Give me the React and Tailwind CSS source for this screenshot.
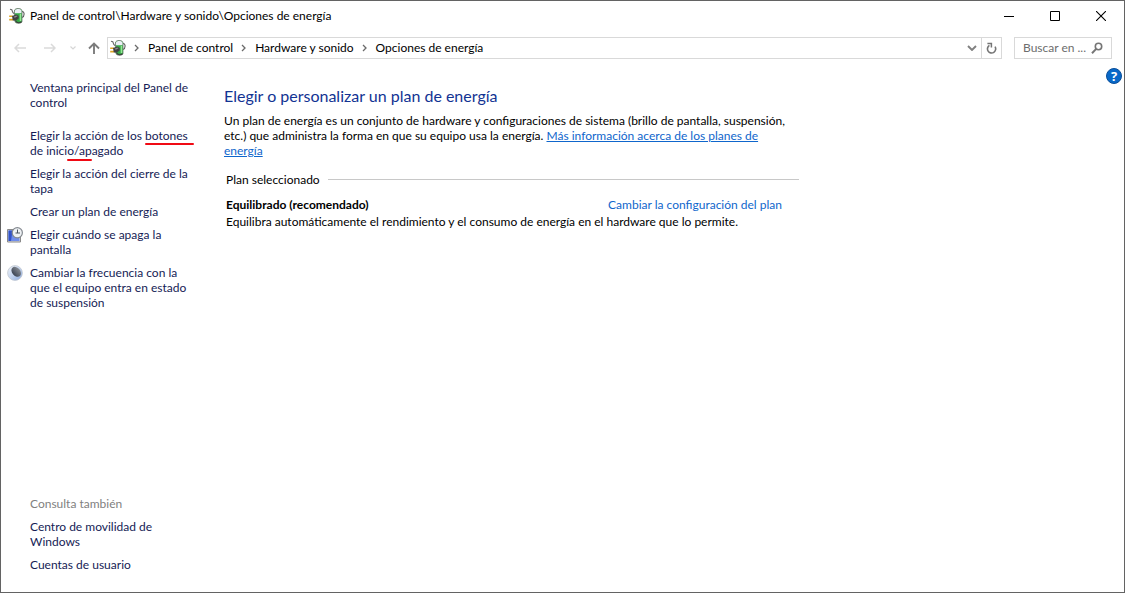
import React from 'react';

function PowerIcon() {
  return (
    <svg className="size-4 shrink-0" viewBox="0 0 16 16" aria-hidden="true">
      <path d="M1 1.2 L2.8 1.8 L3.8 4.5 L5.5 6" fill="none" stroke="#6c6c6c" strokeWidth="1.1" />
      <path d="M13 3.6 C15.8 3.2 15.8 8.5 13 9.5" fill="none" stroke="#5a5a5a" strokeWidth="1.1" />
      <path d="M5.4 3 C5.4 -0.5 13 -0.5 13 3 V13.5 C13 15.8 6 15.8 6 13.5 Z" fill="#35a845" stroke="#6d766f" strokeWidth="0.8" />
      <path d="M5.9 3 C6.2 0.4 12.2 0.4 12.5 3 V5.2 H5.9 Z" fill="#eceef6" />
      <path d="M10.7 6 h1.5 v7 h-1.5 z" fill="#96e896" />
      <path d="M0.2 8.2 h3.6 M0.2 11.6 h4" stroke="#dda422" strokeWidth="1.6" />
      <path d="M3 8 L7.2 6.4 L9.8 8 L9.6 10.4 L6.6 12.8 L3.8 12.4 Z" fill="#414141" />
      <path d="M4.6 8.8 L7.3 7.5 L8.6 8.3 L5.8 9.8 Z" fill="#8b8b8b" />
      <path d="M6.8 13 C8 15.2 11 15.4 12.6 13.6" fill="none" stroke="#3c3c3c" strokeWidth="1.1" />
    </svg>
  );
}

function DisplayClockIcon() {
  return (
    <svg className="size-4 shrink-0" viewBox="0 0 16 16" aria-hidden="true">
      <path d="M0.5 2.5 H13.5 V15 H0.5 Z" fill="#d8dae0" stroke="#8a8a8a" />
      <path d="M1.5 3.5 H12.5 V14 H1.5 Z" fill="#6f8dec" />
      <path d="M1.5 3.5 H5.5 L4 14 H1.5 Z" fill="#3152c8" />
      <circle cx="10.3" cy="5.7" r="5.1" fill="#eef1f4" stroke="#858a90" strokeWidth="1.2" />
      <path d="M10.5 2.5 V6 M8.5 6 H13" stroke="#4c5662" fill="none" />
    </svg>
  );
}

function SleepIcon() {
  return (
    <svg className="size-4 shrink-0" viewBox="0 0 16 16" aria-hidden="true">
      <defs>
        <linearGradient id="moon" x1="0" y1="0" x2="1" y2="1">
          <stop offset="0" stopColor="#f4f7fb" />
          <stop offset="0.5" stopColor="#c4d4ee" />
          <stop offset="1" stopColor="#86a6dc" />
        </linearGradient>
        <linearGradient id="shade" x1="0" y1="0" x2="1" y2="0">
          <stop offset="0" stopColor="#3d4655" />
          <stop offset="1" stopColor="#858a92" />
        </linearGradient>
      </defs>
      <circle cx="8" cy="8" r="7.4" fill="url(#moon)" stroke="#c2c8d0" strokeWidth="0.8" />
      <ellipse cx="9.2" cy="6.8" rx="4" ry="5.6" fill="url(#shade)" transform="rotate(-42 9.2 6.8)" />
    </svg>
  );
}

function Crumb({ children }) {
  return (
    <>
      <svg className="mx-2 h-2 w-[6px] shrink-0" viewBox="0 0 6 8" aria-hidden="true">
        <path d="M1 1 L4 4 L1 7" fill="none" stroke="#6a6a6a" strokeWidth="1.3" />
      </svg>
      <a href="#" className="whitespace-nowrap">{children}</a>
    </>
  );
}

function Marked({ children, line }) {
  return (
    <span className="relative">
      {children}
      <span className={'absolute h-[2px] rounded-full bg-[#f00a14] ' + line} />
    </span>
  );
}

function Task({ icon, children }) {
  return (
    <li className="flex">
      <span className="w-[23px] shrink-0">{icon}</span>
      <a href="#" className="hover:underline">{children}</a>
    </li>
  );
}

export default function App() {
  return (
    <div className="flex min-h-screen flex-col border border-[#636363] bg-white font-['Lato','Open_Sans',sans-serif] text-[12px] leading-[15px] text-black">
      <header className="flex h-[29px] items-center pl-2">
        <PowerIcon />
        <h1 className="ml-[5px] flex-1 whitespace-nowrap">Panel de control\Hardware y sonido\Opciones de energía</h1>
        <button aria-label="Minimizar" className="flex h-full w-[46px] items-center justify-center">
          <svg className="size-[10px]" viewBox="0 0 10 10"><path d="M0 5.5 H10" stroke="#000" /></svg>
        </button>
        <button aria-label="Maximizar" className="flex h-full w-[46px] items-center justify-center">
          <svg className="size-[10px]" viewBox="0 0 10 10"><path d="M0.5 0.5 H9.5 V9.5 H0.5 Z" fill="none" stroke="#000" /></svg>
        </button>
        <button aria-label="Cerrar" className="flex h-full w-[46px] items-center justify-center">
          <svg className="size-[10px]" viewBox="0 0 10 10"><path d="M0 0 L10 10 M10 0 L0 10" stroke="#000" strokeWidth="1.1" /></svg>
        </button>
      </header>

      <nav className="mt-[7px] flex h-[22px] items-center pl-[13px] pr-3" aria-label="Navegación">
        <button aria-label="Atrás" className="w-3">
          <svg className="h-[10px] w-3" viewBox="0 0 12 10"><path d="M12 5 H1 M5 1 L1 5 L5 9" fill="none" stroke="#dadada" strokeWidth="1.5" /></svg>
        </button>
        <button aria-label="Adelante" className="ml-[18px] w-3">
          <svg className="h-[10px] w-3" viewBox="0 0 12 10"><path d="M0 5 H11 M7 1 L11 5 L7 9" fill="none" stroke="#dadada" strokeWidth="1.5" /></svg>
        </button>
        <button aria-label="Ubicaciones recientes" className="ml-[14px] w-[6px]">
          <svg className="h-1 w-[6px]" viewBox="0 0 6 4"><path d="M0.5 0.5 L3 3 L5.5 0.5" fill="none" stroke="#d6d6d6" strokeWidth="1.2" /></svg>
        </button>
        <button aria-label="Subir" className="ml-3 w-3">
          <svg className="h-3 w-3" viewBox="0 0 12 12"><path d="M6 12 V1.5 M1 6.5 L6 1.5 L11 6.5" fill="none" stroke="#7c7c7c" strokeWidth="1.9" /></svg>
        </button>
        <div className="ml-[7px] flex h-full min-w-0 flex-1 items-center border border-[#d9d9d9] pl-[2px]">
          <div className="flex min-w-0 flex-1 items-center pb-px">
            <PowerIcon />
            <Crumb>Panel de control</Crumb>
            <Crumb>Hardware y sonido</Crumb>
            <Crumb>Opciones de energía</Crumb>
          </div>
          <button aria-label="Ubicaciones anteriores" className="mr-1">
            <svg className="h-[6px] w-[10px]" viewBox="0 0 10 6"><path d="M1 1 L5 5 L9 1" fill="none" stroke="#808080" strokeWidth="1.9" /></svg>
          </button>
          <button aria-label="Actualizar" className="flex h-full w-[20px] items-center justify-center border-l border-[#d9d9d9]">
            <svg className="h-3 w-[11px]" viewBox="0 0 11 12">
              <path d="M9 4.6 A4.1 4.1 0 1 1 3.4 3.4" fill="none" stroke="#757575" strokeWidth="1.6" />
              <path d="M1.4 1.4 H5.4 V5.4" fill="none" stroke="#757575" strokeWidth="1.5" />
            </svg>
          </button>
        </div>
        <label className="ml-3 flex h-full w-[98px] items-center border border-[#d9d9d9] px-2 pb-px">
          <input type="text" aria-label="Buscar" placeholder="Buscar en ..." className="min-w-0 flex-1 outline-none placeholder:text-[#6d6d6d]" />
          <svg className="size-3 shrink-0" viewBox="0 0 12 12" aria-hidden="true">
            <circle cx="7.5" cy="4.5" r="3.2" fill="none" stroke="#757575" strokeWidth="1.6" />
            <path d="M5.2 6.9 L1 11.2" stroke="#757575" strokeWidth="2" />
          </svg>
        </label>
      </nav>

      <div className="flex flex-1 items-stretch pt-[21px]">
        <aside className="flex w-[199px] shrink-0 flex-col pb-5 pl-[6px] text-[#151c55]">
          <ul className="flex flex-col gap-2">
            <Task>Ventana principal del Panel de<br />control</Task>
            <li className="h-[2px]" aria-hidden="true" />
            <Task>
              Elegir la acción de los <Marked line="left-0 -right-[6px] -bottom-[2px]">botones</Marked><br />
              de inici<Marked line="left-0 right-0 -bottom-[3px]">o/ap</Marked>agado
            </Task>
            <Task>Elegir la acción del cierre de la<br />tapa</Task>
            <Task>Crear un plan de energía</Task>
            <Task icon={<DisplayClockIcon />}>Elegir cuándo se apaga la<br />pantalla</Task>
            <Task icon={<SleepIcon />}>Cambiar la frecuencia con la<br />que el equipo entra en estado<br />de suspensión</Task>
          </ul>
          <div className="mt-auto flex flex-col gap-2 pl-[23px]">
            <h2 className="text-[#7f7f7f]">Consulta también</h2>
            <a href="#">Centro de movilidad de<br />Windows</a>
            <a href="#">Cuentas de usuario</a>
          </div>
        </aside>

        <main className="min-w-0 flex-1 pl-6 pt-[6px]">
          <div className="max-w-[575px]">
            <h2 className="text-[16px] leading-[20px] text-[#123393]">Elegir o personalizar un plan de energía</h2>
            <p className="mt-[7px] whitespace-nowrap">
              Un plan de energía es un conjunto de hardware y configuraciones de sistema (brillo de pantalla, suspensión,<br />
              etc.) que administra la forma en que su equipo usa la energía.{' '}
              <a href="#" className="text-[#0f66cc] underline">Más información acerca de los planes de<br />energía</a>
            </p>
            <section className="mt-[14px] pl-[2px]">
              <div className="flex items-center gap-2">
                <h3>Plan seleccionado</h3>
                <hr className="flex-1 border-[#c8c8c8]" />
              </div>
              <div className="mt-[10px] flex justify-between pr-[17px]">
                <strong className="font-bold">Equilibrado (recomendado)</strong>
                <a href="#" className="text-[#0f66cc]">Cambiar la configuración del plan</a>
              </div>
              <p className="mt-[2px] whitespace-nowrap">Equilibra automáticamente el rendimiento y el consumo de energía en el hardware que lo permite.</p>
            </section>
          </div>
        </main>

        <button aria-label="Ayuda" className="-mt-3 mr-[2px] flex size-4 items-center justify-center self-start rounded-full border border-[#0a4f9a] bg-[#0868c8] font-['Open_Sans',sans-serif] text-[13px] font-bold text-white">?</button>
      </div>
    </div>
  );
}
